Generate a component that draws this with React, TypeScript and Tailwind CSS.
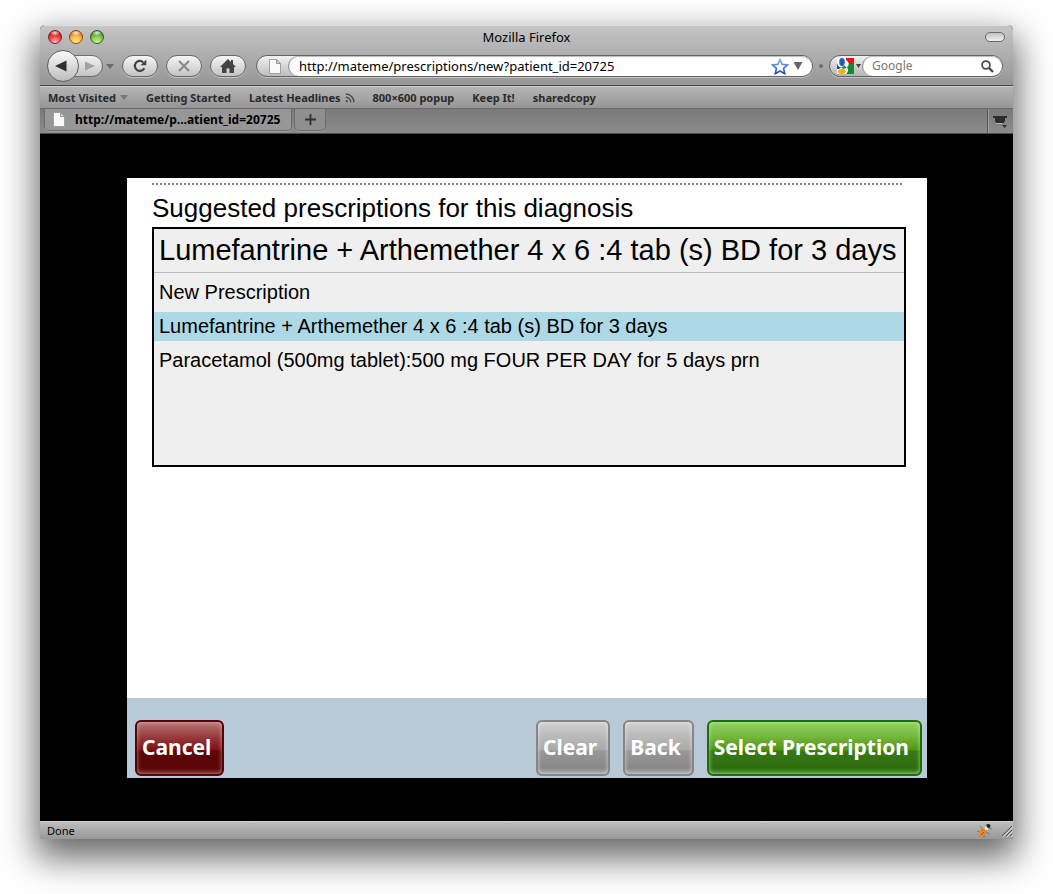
import { useState } from "react";
import type { ReactNode } from "react";

const uiFont = "font-['Lucida_Grande','Noto_Sans','Open_Sans',sans-serif]";
const pageFont = "font-['Liberation_Sans',Arial,sans-serif]";

const prescriptions = [
  "New Prescription",
  "Lumefantrine + Arthemether 4 x 6 :4 tab (s) BD for 3 days",
  "Paracetamol (500mg tablet):500 mg FOUR PER DAY for 5 days prn",
];

function PageIcon() {
  return (
    <svg width="12" height="15" viewBox="0 0 12 15" className="shrink-0" aria-hidden="true">
      <path d="M.5 .5H7.500L11.500 4.500V14.500H.5Z" fill="#fafafa" stroke="#a0a0a0" />
      <path d="M7.500 .5V4.500H11.500Z" fill="#d9d9d9" stroke="#9a9a9a" />
    </svg>
  );
}

function Caret({ className }: { className?: string }) {
  return (
    <svg width="8" height="5" viewBox="0 0 8 5" className={`shrink-0 ${className ?? ""}`} aria-hidden="true">
      <path d="M0 0H8L4 5Z" fill="currentColor" />
    </svg>
  );
}

function PillButton({ label, children }: { label: string; children: ReactNode }) {
  return (
    <button
      type="button"
      aria-label={label}
      className="flex h-[22px] w-9 shrink-0 items-center justify-center rounded-full border border-[#686868] bg-linear-to-b from-[#f6f6f6] to-[#c4c4c4] shadow-[0_1px_0_#c4c4c4]"
    >
      {children}
    </button>
  );
}

function TitleBar() {
  return (
    <div className="flex h-[21px] items-center justify-between px-2">
      <div className="flex w-20 gap-[7px]">
        <button
          type="button"
          aria-label="Close"
          className="size-[14px] rounded-full border border-[#7c2420] bg-[radial-gradient(ellipse_5px_3px_at_50%_15%,rgba(255,255,255,0.85)_0%,transparent_100%),radial-gradient(circle_at_50%_95%,#ffc4c4_0%,#f2474b_45%,#d01a20_75%,#a8393a_100%)]"
        />
        <button
          type="button"
          aria-label="Minimize"
          className="size-[14px] rounded-full border border-[#8a4b15] bg-[radial-gradient(ellipse_5px_3px_at_50%_15%,rgba(255,255,255,0.85)_0%,transparent_100%),radial-gradient(circle_at_50%_95%,#fff08c_0%,#ffc04a_45%,#e8791c_75%,#b86a30_100%)]"
        />
        <button
          type="button"
          aria-label="Zoom"
          className="size-[14px] rounded-full border border-[#35601b] bg-[radial-gradient(ellipse_5px_3px_at_50%_15%,rgba(255,255,255,0.85)_0%,transparent_100%),radial-gradient(circle_at_50%_95%,#d8f79a_0%,#8cc957_45%,#4c9a2c_75%,#4a7f38_100%)]"
        />
      </div>
      <h1 className="text-[13px] leading-4 text-black">Mozilla Firefox</h1>
      <div className="flex w-20 justify-end">
        <button type="button" aria-label="Toggle toolbar" className="h-[10px] w-5 rounded-full border border-[#6a6a6a] bg-linear-to-b from-[#c2c2c2] to-[#f0f0f0]" />
      </div>
    </div>
  );
}

function NavBar() {
  return (
    <div className="flex h-[38px] items-center pl-[7px] pr-[10px]">
      <div className="flex items-center">
        <button
          type="button"
          aria-label="Back"
          className="z-10 flex size-8 shrink-0 items-center justify-center rounded-full border border-[#5f5f5f] bg-linear-to-b from-[#fbfbfb] to-[#bdbdbd] pr-1"
        >
          <svg width="12" height="12" viewBox="0 0 12 12" aria-hidden="true">
            <path d="M0 6L11.500 .5V11.500Z" fill="#303030" />
          </svg>
        </button>
        <button
          type="button"
          aria-label="Forward"
          className="-ml-2 flex h-[22px] w-8 shrink-0 items-center justify-end rounded-r-full border border-[#6f6f6f] bg-linear-to-b from-[#f2f2f2] to-[#c4c4c4] pr-[7px]"
        >
          <svg width="10" height="10" viewBox="0 0 10 10" aria-hidden="true">
            <path d="M10 5L0 .5V9.500Z" fill="#a2a2a2" />
          </svg>
        </button>
        <button type="button" aria-label="History" className="ml-[3px] w-2 text-[#6d6d6d]">
          <Caret />
        </button>
      </div>
      <div className="ml-2 flex gap-2">
        <PillButton label="Reload">
          <svg width="14" height="14" viewBox="0 0 14 14" fill="none" aria-hidden="true">
            <path d="M11.300 9.200A5 5 0 1 1 10.200 3.200" stroke="#444" strokeWidth="2.200" />
            <path d="M13.300 .5V6.300H7.500Z" fill="#444" />
          </svg>
        </PillButton>
        <PillButton label="Stop">
          <svg width="12" height="12" viewBox="0 0 12 12" aria-hidden="true">
            <path d="M1 1L11 11M11 1L1 11" stroke="#8c8c8c" strokeWidth="2.200" />
          </svg>
        </PillButton>
        <PillButton label="Home">
          <svg width="16" height="14" viewBox="0 0 16 14" aria-hidden="true">
            <path d="M8 0L11 3V1H13V5L16 8H14V14H9.500V9.500H6.500V14H2V8H0Z" fill="#444" />
          </svg>
        </PillButton>
      </div>
      <div className="ml-[10px] flex h-[22px] grow items-center rounded-full border border-[#636363] bg-linear-to-b from-[#f2f2f2] to-[#bdbdbd] shadow-[0_1px_0_#c4c4c4]">
        <span className="flex w-[31px] justify-center pl-1">
          <PageIcon />
        </span>
        <div className="flex h-full grow items-center rounded-full border-l border-[#8a8a8a] bg-white pl-[10px] pr-[9px] shadow-[inset_0_1px_1px_#bbb]">
          <input
            type="text"
            aria-label="Address"
            defaultValue="http://mateme/prescriptions/new?patient_id=20725"
            className="h-5 min-w-0 grow bg-transparent text-[13px] leading-5 text-black outline-none"
          />
          <button type="button" aria-label="Bookmark this page">
            <svg width="18" height="17" viewBox="0 0 18 17" aria-hidden="true">
              <defs>
                <linearGradient id="star" x1="0" y1="0" x2="0" y2="1">
                  <stop offset="0" stopColor="#7fb2e0" />
                  <stop offset="1" stopColor="#1f3fd0" />
                </linearGradient>
              </defs>
              <path d="M9 1.500L11.200 6.300L16.500 6.900L12.600 10.400L13.700 15.600L9 13L4.300 15.600L5.400 10.400L1.500 6.900L6.800 6.300Z" fill="#f4f9ff" stroke="url(#star)" strokeWidth="1.600" />
            </svg>
          </button>
          <button type="button" aria-label="Show history" className="ml-1 text-[#666]">
            <svg width="10" height="8" viewBox="0 0 10 8" aria-hidden="true">
              <path d="M.5 0H9.500L5 8Z" fill="currentColor" />
            </svg>
          </button>
        </div>
      </div>
      <span className="mx-[6px] size-1 rounded-full bg-[#6e6e6e]" />
      <div className="flex h-[22px] w-[174px] shrink-0 items-center rounded-full border border-[#636363] bg-linear-to-b from-[#f2f2f2] to-[#b4b4b4] shadow-[0_1px_0_#c4c4c4]">
        <button type="button" aria-label="Search engine" className="flex w-8 shrink-0 items-center gap-0.5 pl-[7px] text-[#444]">
          <svg width="17" height="16" viewBox="0 0 17 16" className="shrink-0" aria-hidden="true">
            <path d="M0 0H17V16H0Z" fill="#fff" />
            <path d="M9 0H17V6H12Q11 3 9 2Z" fill="#e8130f" />
            <path d="M11.500 6H17V16H9Q12.500 13 10 9Q12 8 11.500 6Z" fill="#108c38" />
            <path d="M0 5Q1 9 4 9.500L2 11H0Z" fill="#1b49a8" />
            <ellipse cx="5" cy="4" rx="2.800" ry="4" fill="#1b5dc0" />
            <path d="M4 9Q7 9 7.500 7L9.500 10L6 11Z" fill="#108c38" />
            <ellipse cx="4.800" cy="13.500" rx="4" ry="2.500" fill="#f2b01a" />
          </svg>
          <svg width="5" height="4" viewBox="0 0 5 4" className="shrink-0" aria-hidden="true">
            <path d="M0 0H5L2.500 4Z" fill="currentColor" />
          </svg>
        </button>
        <div className="flex h-full min-w-0 grow items-center rounded-full border-l border-[#8a8a8a] bg-white pl-[9px] pr-2 shadow-[inset_0_1px_1px_#bbb]">
          <input
            type="text"
            aria-label="Search"
            placeholder="Google"
            className="h-5 w-full min-w-0 bg-transparent text-[12px] leading-5 outline-none placeholder:text-[#777]"
          />
          <svg width="13" height="13" viewBox="0 0 13 13" fill="none" className="shrink-0" aria-hidden="true">
            <circle cx="5" cy="5" r="3.900" stroke="#4a4a4a" strokeWidth="1.800" />
            <path d="M8 8L12 12" stroke="#4a4a4a" strokeWidth="2.400" />
          </svg>
        </div>
      </div>
    </div>
  );
}

function BookmarksBar() {
  return (
    <nav className="flex h-[22px] items-center gap-[18px] whitespace-nowrap border-t border-[#c8c8c8] bg-linear-to-b from-[#b4b4b4] to-[#969696] px-2 text-[11px] font-bold leading-4 text-[#2a2a2a]">
      <a href="#most-visited" className="flex items-center gap-1">
        Most Visited
        <Caret className="text-[#777]" />
      </a>
      <a href="#getting-started">Getting Started</a>
      <a href="#headlines" className="flex items-center gap-1">
        Latest Headlines
        <svg width="10" height="10" viewBox="0 0 10 10" fill="none" stroke="#484848" strokeWidth="1.400" aria-hidden="true">
          <circle cx="1.800" cy="8.200" r="1.100" fill="#484848" stroke="none" />
          <path d="M.8 4.300A5 5 0 0 1 5.700 9.300M.8 1A8.200 8.200 0 0 1 9 9.300" />
        </svg>
      </a>
      <a href="#popup">800×600 popup</a>
      <a href="#keep-it">Keep It!</a>
      <a href="#sharedcopy">sharedcopy</a>
    </nav>
  );
}

function TabStrip() {
  return (
    <div className="flex h-[26px] items-start border-b border-t border-b-[#4c4c4c] border-t-[#6a6a6a] bg-linear-to-b from-[#7a7a7a] to-[#8b8b8b] pl-1">
      <button type="button" className="flex h-[22px] w-[248px] items-center gap-[10px] rounded-b-[5px] border border-t-0 border-[#6b6b6b] bg-[#979797] pl-2 text-[12px] font-bold leading-4 text-black shadow-[0_1px_0_#a0a0a0]">
        <PageIcon />
        http://mateme/p...atient_id=20725
      </button>
      <button type="button" aria-label="New tab" className="ml-[2px] flex h-[22px] w-8 items-center justify-center rounded-b-[5px] border border-t-0 border-[#6b6b6b] bg-[#8f8f8f] shadow-[0_1px_0_#a0a0a0]">
        <svg width="11" height="11" viewBox="0 0 11 11" aria-hidden="true">
          <path d="M5.500 0V11M0 5.500H11" stroke="#303030" strokeWidth="1.800" />
        </svg>
      </button>
      <button type="button" aria-label="List all tabs" className="ml-auto flex h-6 w-[26px] items-center justify-center border-l border-[#555] shadow-[inset_1px_0_0_#a0a0a0]">
        <svg width="15" height="13" viewBox="0 0 15 13" aria-hidden="true">
          <path d="M0 1H14V3H12V6L10.500 8H3.500L2 6V3H0Z" fill="#2c2c2c" />
          <path d="M3.500 8.500H9" stroke="#b5b5b5" />
          <path d="M9 10H14L11.500 13Z" fill="#2c2c2c" />
        </svg>
      </button>
    </div>
  );
}

const tones = {
  red: "border-[#560406] bg-[linear-gradient(to_bottom,#b47778_0%,#9c4143_25%,#7e1215_53%,#5e0608_56%,#5a0506_88%,#7a2526_100%)] shadow-[inset_0_0_4px_rgba(255,255,255,0.5)]",
  gray: "border-[#858585] bg-[linear-gradient(to_bottom,#d0d0d0_0%,#bcbcbc_25%,#a9a9a9_53%,#979797_56%,#888888_88%,#a5a5a5_100%)] shadow-[inset_0_0_4px_rgba(255,255,255,0.6)]",
  green: "border-[#1f6c0b] bg-[linear-gradient(to_bottom,#93d060_0%,#78bb42_25%,#529612_53%,#367a14_56%,#2e6c10_88%,#4a8a30_100%)] shadow-[inset_0_0_4px_rgba(200,255,180,0.7)]",
};

function GlossButton({ tone, children }: { tone: keyof typeof tones; children: ReactNode }) {
  return (
    <button
      type="button"
      className={`h-14 whitespace-nowrap rounded-md border-2 pb-0.5 pl-[5px] pr-[11px] text-[21px] font-bold leading-7 text-white ${uiFont} ${tones[tone]}`}
    >
      {children}
    </button>
  );
}

function PrescriptionForm() {
  const [value, setValue] = useState(prescriptions[1]);
  return (
    <main className={`flex min-h-[600px] min-w-0 grow flex-col bg-white text-black ${pageFont}`}>
      <div className="grow pl-[25px] pr-[21px] pt-[5px]">
        <div className="mr-1 border-t-2 border-dotted border-[#808080]" />
        <label htmlFor="prescription" className="block pt-1 text-[26px] leading-[38px]">
          Suggested prescriptions for this diagnosis
        </label>
        <div className="min-h-60 border-2 border-black bg-[#efefef]">
          <input
            id="prescription"
            type="text"
            value={value}
            onChange={(e) => setValue(e.target.value)}
            className="block h-11 w-full border-b border-[#bbb] bg-transparent pl-[5px] text-[29px] leading-[42px] outline-none"
          />
          <ul className="flex flex-col gap-[5px] pt-[5px]">
            {prescriptions.map((item) => (
              <li key={item}>
                <button
                  type="button"
                  onClick={() => setValue(item)}
                  className={`block h-[29px] w-full pl-[5px] text-left text-[20px] leading-[29px] ${item === value ? "bg-[#add8e6]" : ""}`}
                >
                  {item}
                </button>
              </li>
            ))}
          </ul>
        </div>
      </div>
      <footer className="flex h-20 items-end justify-between bg-[#b9cad6] pb-0.5 pl-2 pr-[5px]">
        <GlossButton tone="red">Cancel</GlossButton>
        <div className="flex gap-[13px]">
          <GlossButton tone="gray">Clear</GlossButton>
          <GlossButton tone="gray">Back</GlossButton>
          <GlossButton tone="green">Select Prescription</GlossButton>
        </div>
      </footer>
    </main>
  );
}

function StatusBar() {
  return (
    <div className="flex h-[18px] items-center justify-between border-t border-[#d0d0d0] bg-linear-to-b from-[#bdbdbd] to-[#989898] pl-[7px]">
      <span className="text-[11px] leading-4 text-black">Done</span>
      <div className="flex items-center gap-2">
        <svg width="17" height="16" viewBox="0 0 17 16" aria-hidden="true">
          <path d="M4 3L6 6M1 8L5 9M3 14L5 12M8 15L8 12M14 11L10 9M16 6L12 5M10 1L11 3" stroke="#6d7884" />
          <ellipse cx="7" cy="9" rx="3.200" ry="5.600" transform="rotate(42 7 9)" fill="#e8862a" />
          <path d="M5 12L8 9M6 8L7 7" stroke="#a04c10" />
          <circle cx="10.500" cy="5" r="2" fill="#f6eee0" />
          <circle cx="12.500" cy="3" r="2" fill="#20242c" />
        </svg>
        <svg width="12" height="13" viewBox="0 0 12 13" aria-hidden="true">
          <path d="M1 12L11 2M5 12L11 6M9 12L11 10" stroke="#555" />
          <path d="M2 13L12 3M6 13L12 7M10 13L12 11" stroke="#d8d8d8" />
        </svg>
      </div>
    </div>
  );
}

export default function App() {
  return (
    <div className="min-h-screen overflow-hidden bg-white px-10 pb-[54px] pt-[25px]">
      <div className={`flex min-h-[814px] flex-col overflow-hidden rounded-t-[5px] bg-black shadow-[0_15px_35px_4px_rgba(0,0,0,0.6)] ${uiFont}`}>
        <header>
          <div className="border-b border-t border-b-[#4a4a4a] border-t-[#dedede] bg-linear-to-b from-[#c5c5c5] to-[#969696]">
            <TitleBar />
            <NavBar />
          </div>
          <BookmarksBar />
          <TabStrip />
        </header>
        <div className="flex grow items-start bg-black pb-[43px] pl-[87px] pr-[86px] pt-11">
          <PrescriptionForm />
        </div>
        <StatusBar />
      </div>
    </div>
  );
}
